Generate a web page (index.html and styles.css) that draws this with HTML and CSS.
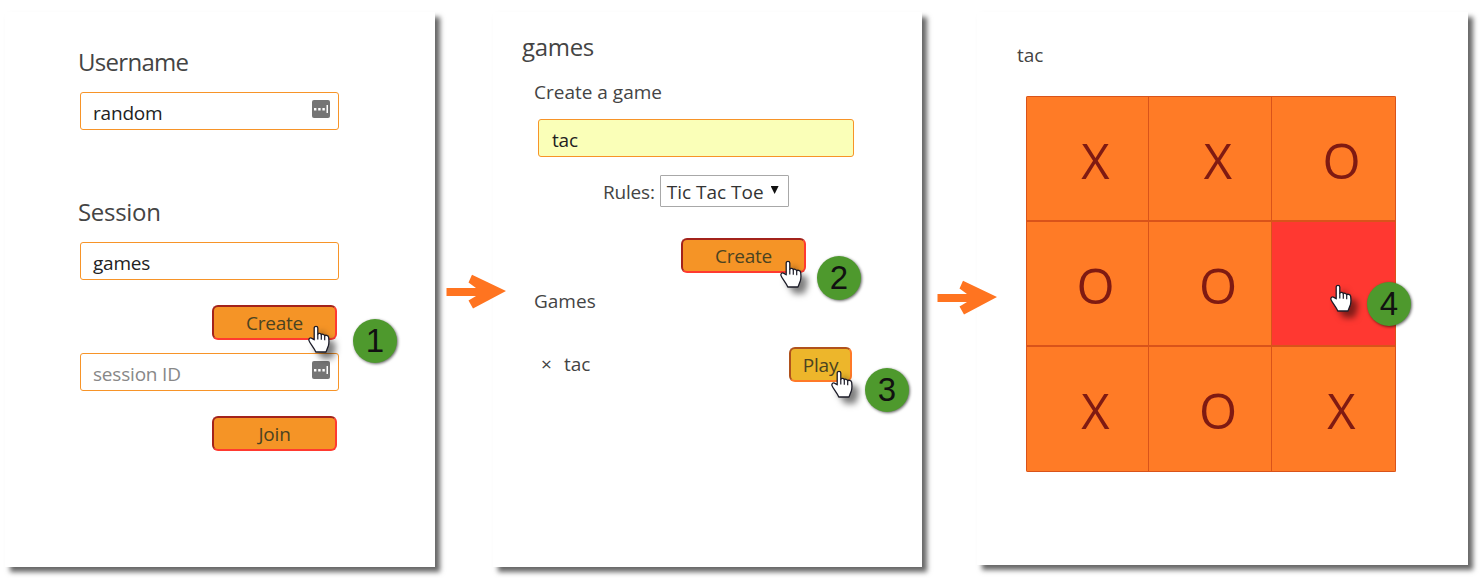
FILE: index.html
```html
<!DOCTYPE html>
<html lang="en">
<head>
<meta charset="utf-8">
<title>Tic Tac Toe session flow</title>
<link rel="stylesheet" href="styles.css">
</head>
<body>
<svg class="defs" width="0" height="0">
  <defs>
    <symbol id="hand" viewBox="0 0 22 28">
      <path d="M6.200 14.800V3C6.200.8 9.800.8 9.800 3v6.200c.6-1.200 3.200-1 3.500.6.7-1 3-.7 3.300.9.800-.8 3.600-.5 4 1.500.5 3.300.5 6.300-.3 8.800L18 27H7.800C6 22.500 2 18.500 1 15.600c-.6-1.900 1.200-3.500 3-2.200z" fill="#fff" stroke="#1c1c28" stroke-width="1.300" stroke-linejoin="round"/>
      <path d="M9.800 9v5.500M13.300 9.800v5M16.700 11v4.200" stroke="#1c1c28" stroke-width="1.200" fill="none"/>
    </symbol>
    <symbol id="arrow" viewBox="0 0 60 36">
      <path d="M0.500 14h29.500L22.500 8.500 26 .8 60 17 27 34.500 22.500 26.500 30 22H.5z" fill="#ff7420"/>
    </symbol>
    <symbol id="key" viewBox="0 0 18 18">
      <rect width="18" height="18" rx="2" fill="#757575"/>
      <path d="M2 8h2.400v2.400H2zM6.200 8h2.400v2.400H6.200zM10.400 8h2.400v2.400h-2.400zM14.500 5h1.500v8h-1.500z" fill="#fff"/>
    </symbol>
  </defs>
</svg>
<main class="flow">
  <section class="panel panel-login">
    <h2 class="title title-user">Username</h2>
    <div class="field"><span>random</span><svg class="key"><use href="#key"/></svg></div>
    <h2 class="title title-session">Session</h2>
    <div class="field"><span>games</span></div>
    <div class="button create">Create</div>
    <div class="field session-id"><span>session ID</span><svg class="key"><use href="#key"/></svg></div>
    <div class="button join">Join</div>
    <svg class="hand hand-1"><use href="#hand"/></svg>
    <span class="badge badge-1">1</span>
  </section>
  <section class="panel panel-games">
    <h2 class="title title-games">games</h2>
    <p class="label">Create a game</p>
    <div class="field filled"><span>tac</span></div>
    <div class="rules"><span>Rules:</span><div class="select"><span>Tic Tac Toe</span><i class="caret"></i></div></div>
    <div class="button create-game">Create</div>
    <p class="label label-list">Games</p>
    <div class="game"><span class="remove">×</span><span class="name">tac</span><div class="button play">Play</div></div>
    <svg class="arrow arrow-1"><use href="#arrow"/></svg>
    <svg class="hand hand-2"><use href="#hand"/></svg>
    <span class="badge badge-2">2</span>
    <svg class="hand hand-3"><use href="#hand"/></svg>
    <span class="badge badge-3">3</span>
  </section>
  <section class="panel panel-board">
    <p class="label label-board">tac</p>
    <div class="board">
      <div class="cell">X</div><div class="cell">X</div><div class="cell">O</div>
      <div class="cell">O</div><div class="cell">O</div><div class="cell active"></div>
      <div class="cell">X</div><div class="cell">O</div><div class="cell">X</div>
    </div>
    <svg class="arrow arrow-2"><use href="#arrow"/></svg>
    <svg class="hand hand-4"><use href="#hand"/></svg>
    <span class="badge badge-4">4</span>
  </section>
</main>
</body>
</html>
```
FILE: styles.css
```css
* { box-sizing: border-box; margin: 0; }
body { width: 1484px; height: 578px; overflow: hidden; background: #fff; color: #444; font: 19px/26px "Open Sans", "Noto Sans", sans-serif; }
.defs { position: absolute; }
.flow { display: flex; align-items: flex-start; padding: 12px 0 0 5px; }
.panel { position: relative; display: flex; flex-direction: column; align-items: flex-start; height: 555px; background: #fff; box-shadow: 5px 5px 5px rgba(0, 0, 0, .6); }
.panel-login { width: 430px; padding: 34px 0 0 75px; margin-right: 58px; }
.panel-games { width: 429px; padding: 19px 0 0 45px; margin-right: 55px; }
.panel-board { width: 491px; height: 553px; padding: 30px 0 0 49px; }

.title { margin-left: -2px; height: 32px; font-size: 24px; line-height: 32px; font-weight: 400; letter-spacing: -.3px; }
.title-user { letter-spacing: -.7px; margin-bottom: 1px; }
.title-session { margin-top: 66px; }
.title-games { margin-left: -16px; }
.field { display: flex; justify-content: space-between; width: 259px; height: 38px; margin-top: 13px; padding: 7px 8px 0 12px; border: 1.5px solid #f79428; border-radius: 3px; background: #fff; color: #222; line-height: 26px; letter-spacing: -.2px; }
.key { width: 18px; height: 18px; }
.title-session + .field { margin-top: 14px; }
.button { width: 125px; height: 35px; border: 2px solid; border-color: #a3231b #ff3a30 #ff3a30 #a3231b; border-radius: 6px; background: #f59426; color: #4b4321; text-align: center; line-height: 33px; letter-spacing: -.2px; }
.create, .join { margin-left: 132px; }
.create { margin-top: 25px; }
.session-id { color: #888; }
.join { margin-top: 25px; }

.label { margin-left: -4px; }
.panel-games > .label { margin-top: 16px; }
.filled { width: 316px; margin-top: 14px; padding-left: 13px; background: #faffb8; }
.rules { display: flex; align-items: flex-start; margin: 18px 0 0 65px; line-height: 34px; }
.rules > span { letter-spacing: -.2px; }
.select { display: flex; width: 129px; height: 32px; margin-left: 5px; padding-left: 6px; border: 1px solid #a8a8a8; color: #333; line-height: 33px; border-radius: 1px; white-space: nowrap; }
.caret { width: 8px; height: 8px; margin: 10px 0 0 7px; background: #111; clip-path: polygon(0 0, 100% 0, 50% 100%); }
.create-game { margin: 29px 0 0 143px; }
.panel-games > .label-list { margin-top: 15px; }
.game { display: flex; width: 314px; margin-top: 33px; line-height: 34px; }
.remove { width: 26px; padding-left: 3px; }
.play { width: 63px; margin-left: auto; border-color: #b0521c #ff7928 #ff7928 #b0521c; background: #edb62b; }

.label-board { margin-left: -9px; }
.board { display: grid; grid-template-columns: 123px 123px 124px; grid-template-rows: 125px 125px 126px; margin-top: 28px; border-radius: 2px; overflow: hidden; }
.cell { padding: 0 0 0 16px; border: 1px solid #d9531a; border-left-width: 0; background: #ff7b26; color: #7f1a12; font-size: 49px; line-height: 127px; text-align: center; }
.cell:nth-child(3n+1) { border-left-width: 1px; }
.active { background: #ff3831; }

.arrow, .hand, .badge { position: absolute; }
.arrow { width: 60px; height: 36px; }
.arrow-1 { left: -47px; top: 262px; }
.arrow-2 { left: -40px; top: 268px; }
.hand { width: 22px; height: 28px; filter: drop-shadow(6px 6px 3px rgba(0, 0, 0, .5)); }
.hand-1 { left: 303px; top: 313px; }
.hand-2 { left: 287px; top: 248px; }
.hand-3 { left: 338px; top: 358px; }
.hand-4 { left: 353px; top: 272px; }
.badge { width: 44px; height: 44px; border-radius: 50%; background: #4e992d; color: #111; box-shadow: 1px 1px 3px rgba(0, 0, 0, .6); font: 33px/43px "Liberation Sans", Arial, sans-serif; text-align: center; }
.badge-1 { left: 348px; top: 307px; }
.badge-2 { left: 324px; top: 244px; }
.badge-3 { left: 372px; top: 356px; }
.badge-4 { left: 390px; top: 270px; }
```
